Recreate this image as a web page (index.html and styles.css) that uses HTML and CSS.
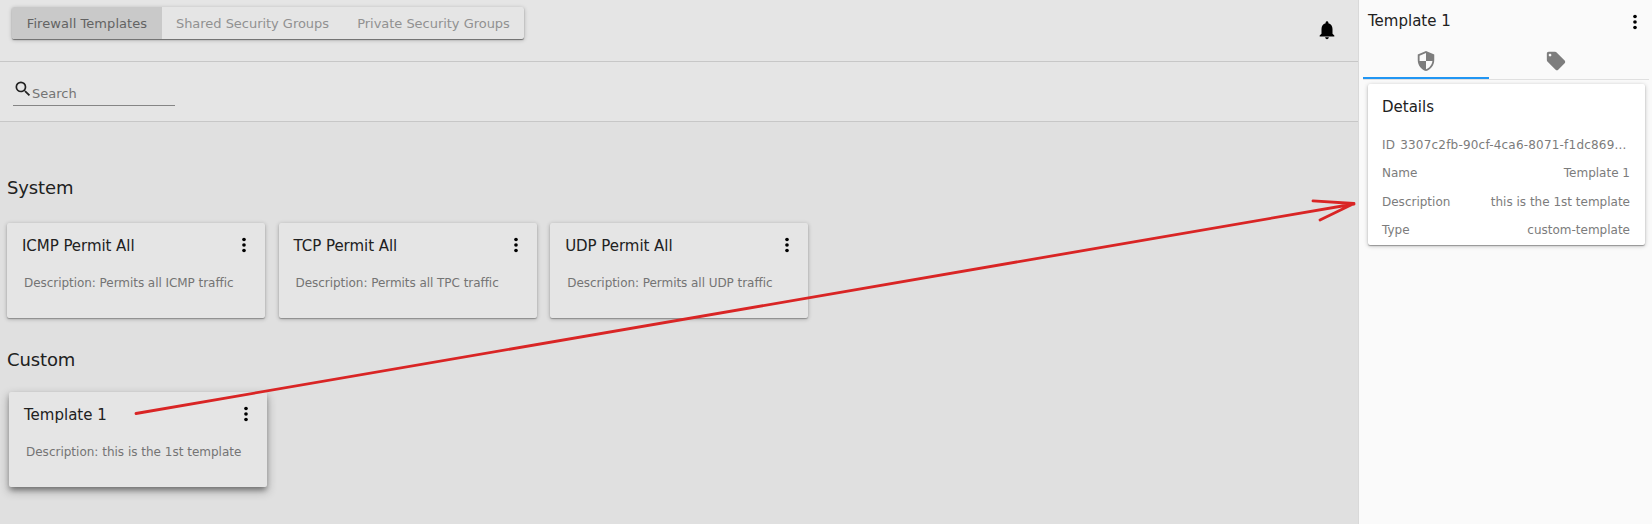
FILE: index.html
```html
<!DOCTYPE html>
<html lang="en">
<head>
<meta charset="utf-8">
<title>Firewall Templates</title>
<link rel="stylesheet" href="styles.css">
</head>
<body>
<svg class="defs" aria-hidden="true">
<symbol id="more" viewBox="0 0 24 24"><circle cx="12" cy="6" r="2"/><circle cx="12" cy="12" r="2"/><circle cx="12" cy="18" r="2"/></symbol>
</svg>
<div class="app">
<main class="main">
<header class="topbar">
<nav class="toggle">
<button class="toggle-item active">Firewall Templates</button>
<button class="toggle-item">Shared Security Groups</button>
<button class="toggle-item">Private Security Groups</button>
</nav>
<svg class="bell" viewBox="0 0 24 24"><path d="M12 22c1.100 0 2-.9 2-2h-4c0 1.100.89 2 2 2zm6-6v-5c0-3.070-1.640-5.640-4.500-6.320V4c0-.83-.67-1.500-1.500-1.500s-1.500.67-1.500 1.500v.68C7.630 5.360 6 7.920 6 11v5l-2 2v1h16v-1l-2-2z"/></svg>
</header>
<div class="searchbar">
<div class="search">
<svg class="search-icon" viewBox="0 0 24 24"><path d="M15.500 14h-.79l-.28-.27A6.471 6.471 0 0 0 16 9.500 6.500 6.500 0 1 0 9.500 16c1.610 0 3.090-.59 4.230-1.570l.27.28v.79l5 4.990L20.490 19l-4.990-5zm-6 0C7.010 14 5 11.990 5 9.500S7.010 5 9.500 5 14 7.010 14 9.500 11.990 14 9.500 14z"/></svg>
<span class="search-label">Search</span>
</div>
</div>
<section class="group">
<h2 class="group-title">System</h2>
<div class="cards">
<article class="card"><div class="card-head"><h3 class="card-title">ICMP Permit All</h3><svg class="more"><use href="#more"/></svg></div><p class="card-text">Description: Permits all ICMP traffic</p></article>
<article class="card"><div class="card-head"><h3 class="card-title">TCP Permit All</h3><svg class="more"><use href="#more"/></svg></div><p class="card-text">Description: Permits all TPC traffic</p></article>
<article class="card"><div class="card-head"><h3 class="card-title">UDP Permit All</h3><svg class="more"><use href="#more"/></svg></div><p class="card-text">Description: Permits all UDP traffic</p></article>
</div>
</section>
<section class="group custom">
<h2 class="group-title">Custom</h2>
<div class="cards">
<article class="card selected"><div class="card-head"><h3 class="card-title">Template 1</h3><svg class="more"><use href="#more"/></svg></div><p class="card-text">Description: this is the 1st template</p></article>
</div>
</section>
</main>
<aside class="side">
<div class="side-head"><h3 class="side-title">Template 1</h3><svg class="more"><use href="#more"/></svg></div>
<div class="tabs">
<div class="tab current"><svg class="tab-icon" viewBox="0 0 24 24"><path d="M12 1L3 5v6c0 5.550 3.840 10.740 9 12 5.160-1.260 9-6.450 9-12V5l-9-4zm0 10.990h7c-.53 4.120-3.280 7.790-7 8.940V12H5V6.300l7-3.110v8.800z"/></svg></div>
<div class="tab"><svg class="tab-icon" viewBox="0 0 24 24"><path d="M21.410 11.580l-9-9C12.050 2.220 11.550 2 11 2H4c-1.100 0-2 .9-2 2v7c0 .55.22 1.050.59 1.420l9 9c.36.36.86.58 1.410.58.55 0 1.050-.22 1.410-.59l7-7c.37-.36.59-.86.59-1.410 0-.55-.23-1.060-.59-1.420zM5.500 7C4.670 7 4 6.330 4 5.500S4.670 4 5.500 4 7 4.670 7 5.500 6.330 7 5.500 7z"/></svg></div>
</div>
<section class="details">
<h3 class="details-title">Details</h3>
<div class="row row-id"><span>ID</span><span class="value">3307c2fb-90cf-4ca6-8071-f1dc869...</span></div>
<div class="row"><span>Name</span><span class="value">Template 1</span></div>
<div class="row"><span>Description</span><span class="value">this is the 1st template</span></div>
<div class="row"><span>Type</span><span class="value">custom-template</span></div>
</section>
</aside>
</div>
<svg class="arrow" viewBox="0 0 1652 524"><path d="M136 413.500L1354 204M1313 200.800L1354 203.500L1320 220"/></svg>
</body>
</html>
```
FILE: styles.css
```css
* { box-sizing: border-box; }
body { margin: 0; font-family: "DejaVu Sans", sans-serif; color: #212121; overflow: hidden; }
h2, h3, p { margin: 0; font-weight: 400; }
.defs { display: none; }
.app { display: flex; height: 524px; }
.main { width: 1359px; background: #e0e0e0; border-right: 1px solid #d9d9d9; flex: none; }
.topbar { height: 62px; background: #e5e5e5; border-bottom: 1px solid #c7c7c7; display: flex; justify-content: space-between; align-items: flex-start; padding: 7px 20px 0 12px; }
.toggle { display: flex; height: 32px; border-radius: 2px; overflow: hidden; box-shadow: 0 1px 1px rgba(0,0,0,.45), 0 1px 4px rgba(0,0,0,.25); }
.toggle-item { width: 181px; border: 0; background: none; padding: 1px 0 0; font: 13px/31px "DejaVu Sans", sans-serif; letter-spacing: -.03px; color: #919191; white-space: nowrap; text-align: center; }
.active { width: 150px; background: #c9c9c9; color: #636363; letter-spacing: .06px; }
.bell { width: 22px; height: 22px; margin-top: 12px; }
.searchbar { height: 60px; background: #e5e5e5; border-bottom: 1px solid #c7c7c7; padding: 17px 13px 0; }
.search { width: 162px; height: 27px; border-bottom: 1px solid #858585; display: flex; }
.search-icon { width: 20px; height: 20px; flex: none; fill: #212121; }
.search-label { font-size: 13px; line-height: 16px; margin-top: 7px; margin-left: -1px; color: #747474; }
.group { padding: 54px 7px 0; }
.group-title { font-size: 18px; line-height: 24px; letter-spacing: -.12px; margin-bottom: 23px; }
.custom { padding-top: 30px; }
.custom .group-title { margin-bottom: 20px; }
.cards { display: flex; gap: 13.600px; }
.card { width: 258px; height: 95px; background: #e5e5e5; border-radius: 2px; padding: 12px 10px 0 15px; letter-spacing: -.05px; box-shadow: 0 1px 1px rgba(0,0,0,.25), 0 1px 4px rgba(0,0,0,.28); }
.selected { margin-left: 2px; letter-spacing: 0; box-shadow: 0 5px 5px -3px rgba(0,0,0,.2), 0 4px 10px 1px rgba(0,0,0,.24), 0 3px 5px rgba(0,0,0,.2); }
.card-head, .side-head { display: flex; justify-content: space-between; }
.card-title, .side-title, .details-title { font-size: 15px; line-height: 22px; }
.more { width: 22px; height: 22px; margin-top: -1px; }
.card-text { font-size: 12px; line-height: 16px; color: #747474; margin: 18px 0 0 2px; white-space: nowrap; }
.side { flex: 1; background: #fafafa; padding: 0 3px 0 4px; }
.side-head { height: 47px; padding: 10px 3px 0 5px; }
.side-head .more { margin-top: 1px; }
.tabs { height: 33px; border-bottom: 1px solid #e0e0e0; display: flex; }
.tab { flex: 0 0 134px; height: 32px; display: flex; justify-content: center; padding-top: 3px; }
.current { flex-basis: 126px; border-bottom: 2px solid #2196f3; }
.tab-icon { width: 22px; height: 22px; fill: #7d7d7d; }
.details { width: 277px; height: 161px; margin: 4px 0 0 5px; background: #fff; border-radius: 2px; padding: 12px 15px 0 14px; box-shadow: 0 1px 1px rgba(0,0,0,.3), 0 1px 4px rgba(0,0,0,.25); }
.details-title { margin-bottom: 13px; }
.row { display: flex; justify-content: space-between; font-size: 12px; line-height: 28.400px; height: 28.400px; color: #7c7c7c; white-space: nowrap; }
.row-id { justify-content: flex-start; gap: 5px; letter-spacing: .2px; }
.arrow { position: absolute; left: 0; top: 0; width: 1652px; height: 524px; fill: none; stroke: #d92525; stroke-width: 2.800; stroke-linecap: round; stroke-linejoin: round; pointer-events: none; }
```
